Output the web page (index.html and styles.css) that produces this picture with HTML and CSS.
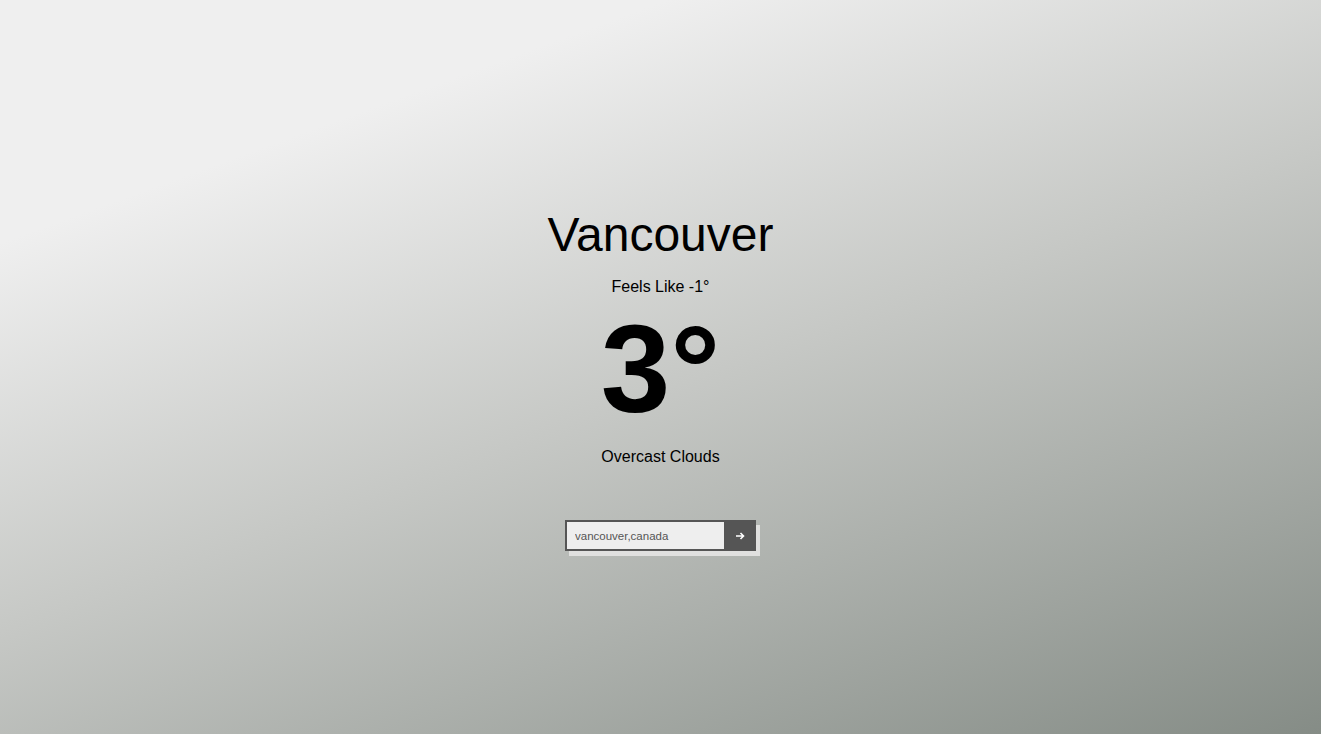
FILE: index.html
```html
<!DOCTYPE html>
<html lang="en">
<head>
<meta charset="utf-8">
<title>Weather</title>
<link rel="stylesheet" href="styles.css">
</head>
<body>
<main class="weather">
  <h1 class="city">Vancouver</h1>
  <p class="feels">Feels Like -1°</p>
  <p class="temp">3°</p>
  <p class="desc">Overcast Clouds</p>
  <form class="search">
    <input class="search-input" type="text" value="vancouver,canada">
    <button class="search-btn" type="button" aria-label="Search">
      <svg width="10" height="8" viewBox="0 0 10 8"><path d="M1 4H8.5M5.5 1L8.5 4L5.5 7" fill="none" stroke="#fff" stroke-width="1.6"/></svg>
    </button>
  </form>
</main>
</body>
</html>
```
FILE: styles.css
```css
html, body {
  margin: 0;
  height: 100%;
}
body {
  background: linear-gradient(160deg, #efefef 20%, #c6c8c5 52%, #858c86 100%);
  font-family: "Liberation Sans", Arial, Helvetica, sans-serif;
  color: #000;
}
.weather {
  display: flex;
  flex-direction: column;
  align-items: center;
  padding-top: 211px;
}
.city {
  margin: 0;
  font-size: 48px;
  font-weight: normal;
  line-height: 48px;
}
.feels {
  margin: 20px 0 0;
  font-size: 16px;
  line-height: 16px;
}
.temp {
  margin: 11px 0 0;
  font-size: 125px;
  font-weight: bold;
  line-height: 125px;
}
.desc {
  margin: 18px 0 0;
  font-size: 16px;
  line-height: 16px;
}
.search {
  margin: 55px 0 0 0;
  display: flex;
  background: #555555;
  padding: 2px 0 2px 2px;
  box-shadow: 4px 5px 0 #e0e0df;
}
.search-input {
  width: 157px;
  height: 27px;
  box-sizing: border-box;
  border: none;
  outline: none;
  background: #eeeeee;
  padding: 0 0 0 8px;
  margin: 0;
  font-family: "Liberation Sans", Arial, sans-serif;
  font-size: 11.5px;
  color: #555;
}
.search-btn {
  width: 32px;
  height: 31px;
  margin: -2px 0;
  border: none;
  padding: 0;
  background: #555555;
  display: flex;
  align-items: center;
  justify-content: center;
}
```
